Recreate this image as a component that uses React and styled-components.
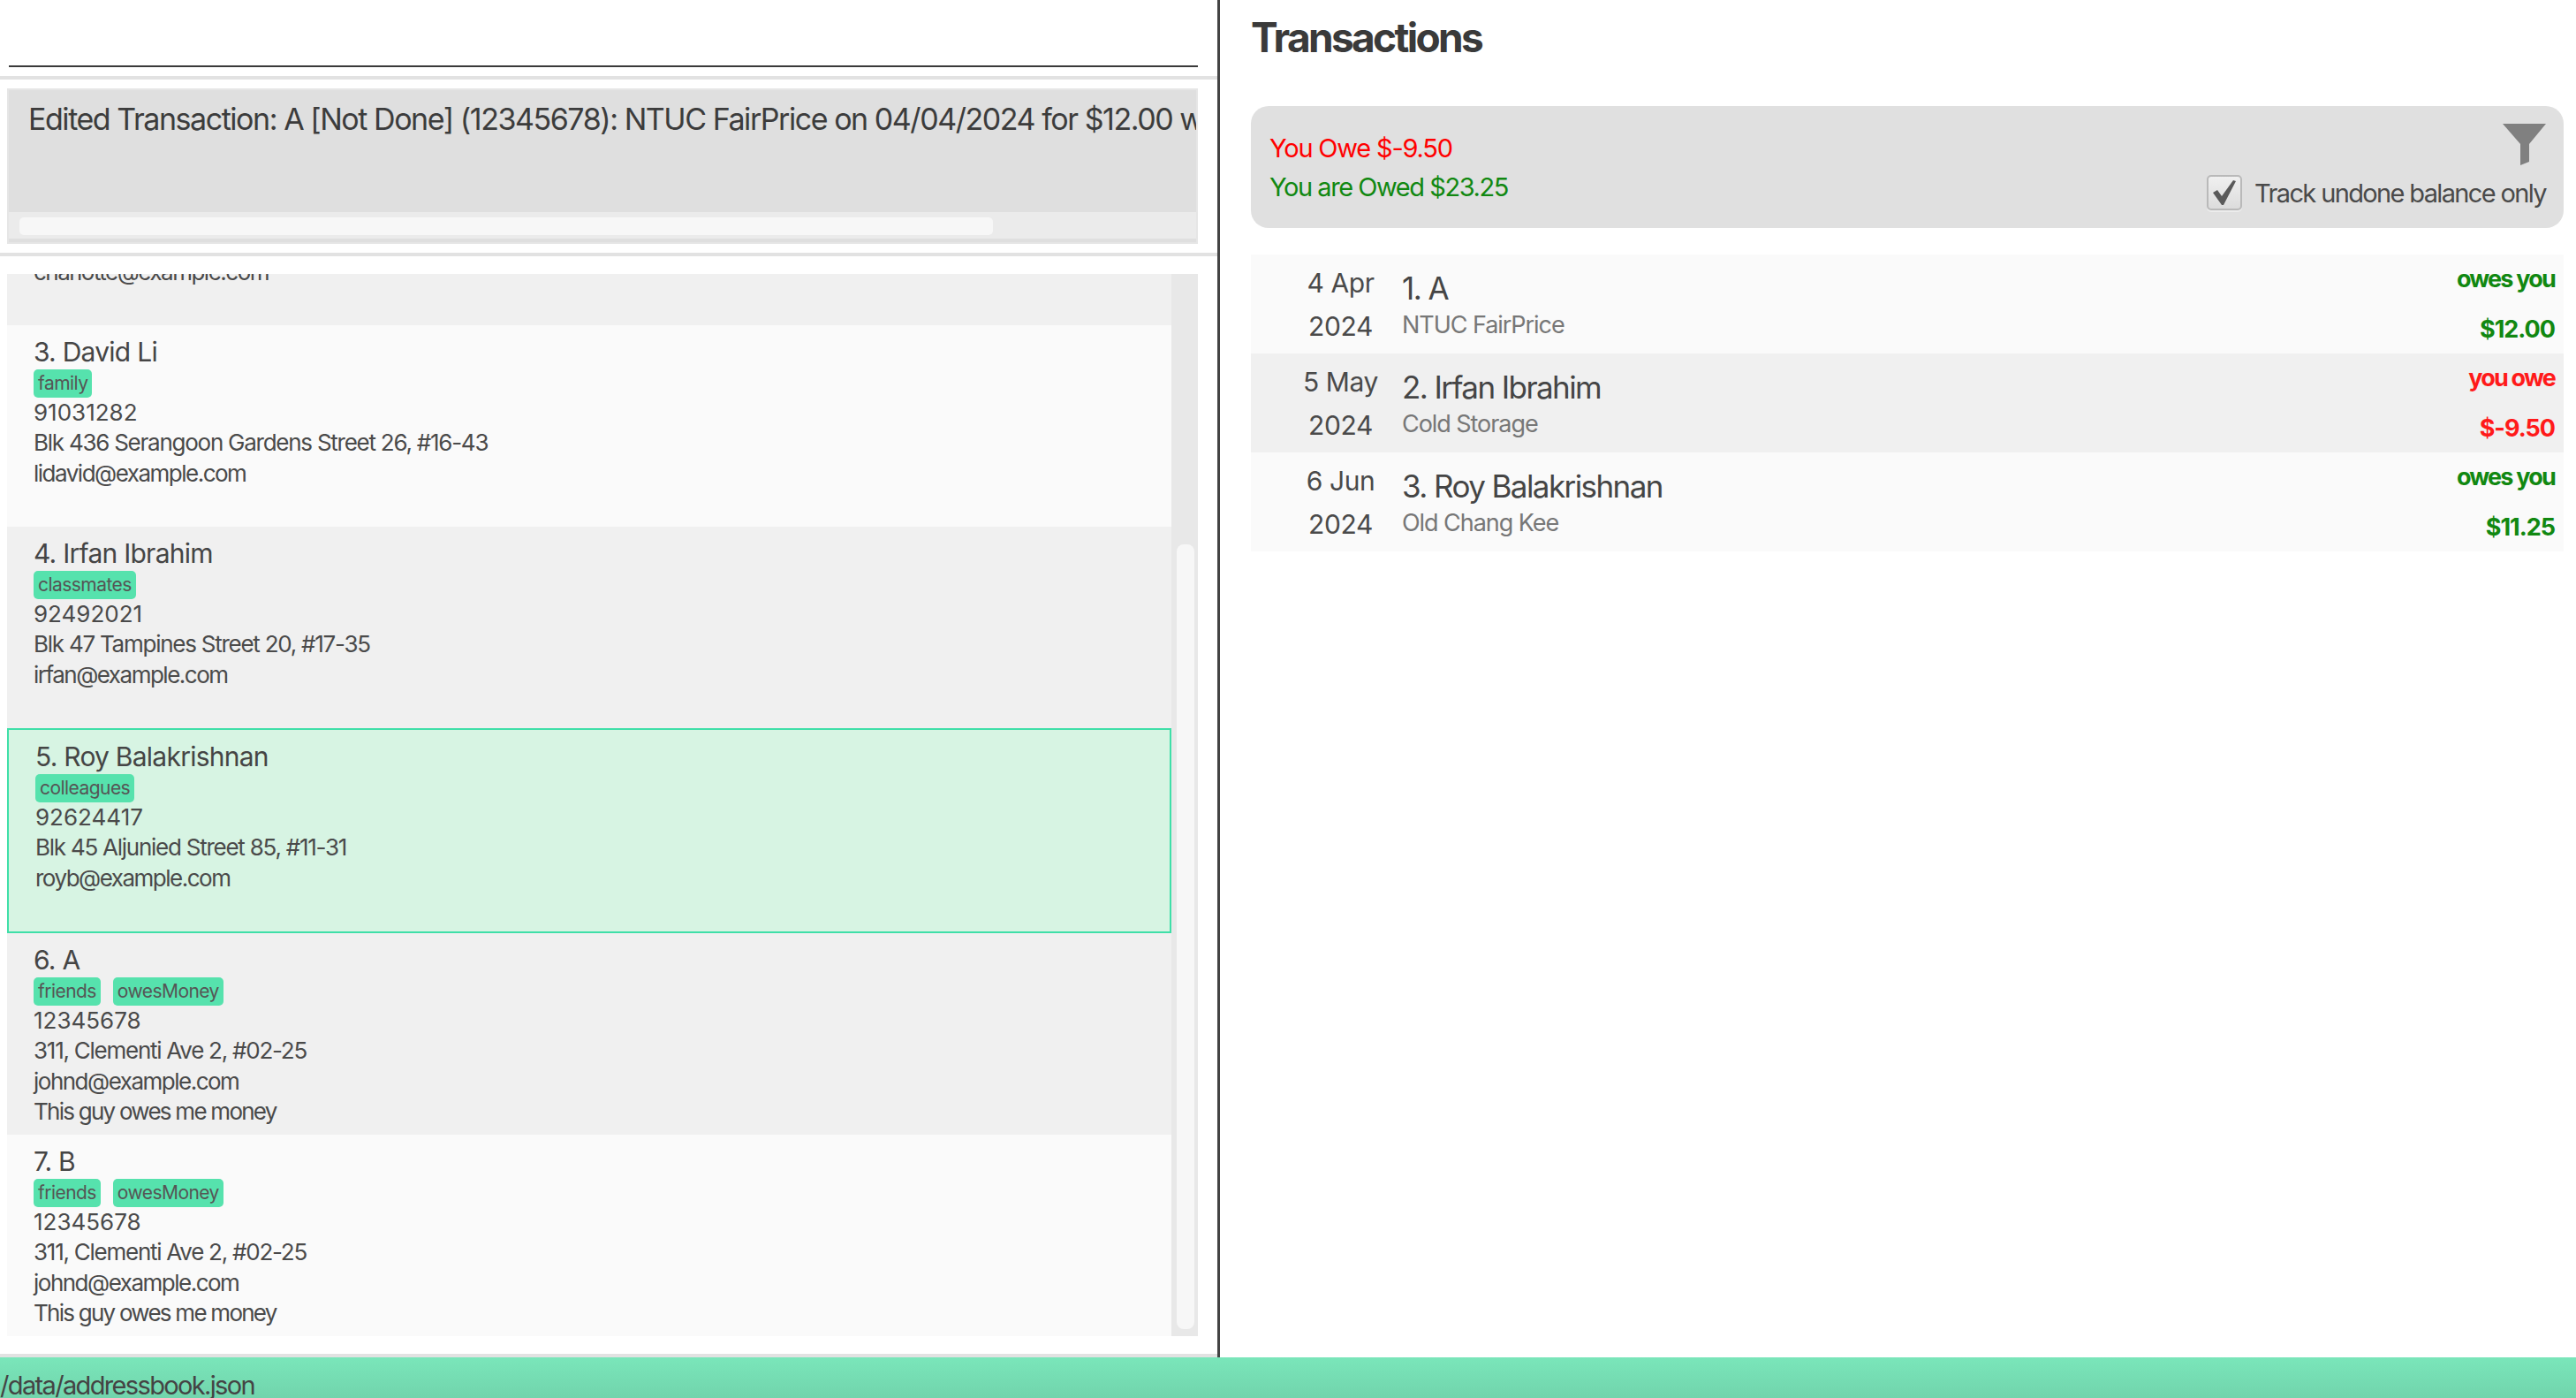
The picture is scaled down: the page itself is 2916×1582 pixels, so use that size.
import React from 'react';
import styled, { createGlobalStyle } from 'styled-components';

const GlobalStyle = createGlobalStyle`
	html, body {
		margin: 0;
		padding: 0;
		background: #fff;
		overflow: hidden;
	}
	* {
		box-sizing: border-box;
	}
`;

const Page = styled.div`
	width: 2916px;
	height: 1582px;
	display: flex;
	flex-direction: column;
	font-family: Inter, "Noto Sans", sans-serif;
	color: #4a4a4a;
	overflow: hidden;
`;

const Main = styled.div`
	display: flex;
	height: 1536px;
`;

const LeftPane = styled.div`
	width: 1381px;
	display: flex;
	flex-direction: column;
	border-right: 3px solid #444;
`;

const CommandBar = styled.div`
	height: 90px;
	padding: 0 22px 0 10px;
	border-bottom: 4px solid #e2e2e2;
`;

const CommandInput = styled.div`
	height: 76px;
	border-bottom: 2px solid #3a3a3a;
`;

const ResultBar = styled.div`
	height: 200px;
	padding: 10px 22px 10px 8px;
	border-bottom: 4px solid #e2e2e2;
`;

const ResultBox = styled.div`
	height: 176px;
	display: flex;
	flex-direction: column;
	background: #dfdfdf;
	border: 2px solid #e6e6e6;
`;

const ResultText = styled.div`
	flex: 1;
	padding: 12px 0 0 22px;
	font-size: 34px;
	line-height: 42px;
	letter-spacing: -1.45px;
	color: #3c3c3c;
	white-space: nowrap;
	overflow: hidden;
`;

const HorizontalTrack = styled.div`
	height: 30px;
	margin-bottom: 4px;
	padding: 6px 0 4px 12px;
	background: #ebebeb;
`;

const HorizontalThumb = styled.div`
	width: 1102px;
	height: 20px;
	background: #f7f7f7;
	border-radius: 5px;
`;

const ListSection = styled.div`
	height: 1246px;
	display: flex;
	padding: 20px 22px 20px 8px;
	border-bottom: 4px solid #e2e2e2;
`;

const ListViewport = styled.div`
	flex: 1;
	overflow: hidden;
`;

const PersonList = styled.div`
	margin-top: -170px;
`;

const PersonCell = styled.div`
	height: ${(p) => (p.$selected ? '232px' : '228px')};
	padding: ${(p) => (p.$clipped ? '151px' : '12px')} 0 0 30px;
	background: ${(p) => (p.$selected ? '#d7f4e3' : p.$light ? '#fafafa' : '#f0f0f0')};
	${(p) => p.$selected && 'border: 2px solid #3fdfa8;'}
`;

const PersonName = styled.div`
	font-size: 30px;
	line-height: 36px;
	letter-spacing: -0.75px;
	margin-bottom: 2px;
	color: #454545;
`;

const TagRow = styled.div`
	display: flex;
	gap: 14px;
`;

const Tag = styled.span`
	height: 32px;
	padding: 0 5px;
	border-radius: 5px;
	background: #56e2ad;
	font-size: 21px;
	line-height: 31px;
	letter-spacing: -0.55px;
	color: #555;
`;

const PersonLine = styled.div`
	font-size: 26px;
	line-height: 34.3px;
	letter-spacing: ${(p) => p.$tracking || 0}px;
	white-space: nowrap;
`;

const VerticalTrack = styled.div`
	width: 30px;
	padding: 306px 4px 0 6px;
	background: #e8e8e8;
`;

const VerticalThumb = styled.div`
	height: 888px;
	background: #f7f7f7;
	border-radius: 8px;
`;

const RightPane = styled.div`
	flex: 1;
	display: flex;
	flex-direction: column;
	padding: 0 14px 0 35px;
`;

const Title = styled.div`
	height: 120px;
	padding-top: 17px;
	font-size: 46px;
	line-height: 50px;
	font-weight: 700;
	letter-spacing: -2.65px;
	color: #3a3a3a;
`;

const SummaryPanel = styled.div`
	height: 138px;
	display: flex;
	justify-content: space-between;
	padding: 20px 20px 20px 21px;
	background: #e0e0e0;
	border-radius: 20px;
`;

const Balances = styled.div`
	display: flex;
	flex-direction: column;
	justify-content: center;
	gap: 8px;
	padding-top: 2px;
`;

const Balance = styled.div`
	font-size: 29px;
	line-height: 36px;
	letter-spacing: ${(p) => (p.$owed ? '-1.45px' : '-1.2px')};
	color: ${(p) => (p.$owed ? '#118811' : '#ff0000')};
`;

const FilterColumn = styled.div`
	display: flex;
	flex-direction: column;
	align-items: flex-end;
	justify-content: space-between;
`;

const TrackToggle = styled.div`
	display: flex;
	align-items: center;
	gap: 14px;
	font-size: 29px;
	letter-spacing: -1.64px;
	color: #4a4a4a;
`;

const CheckBox = styled.span`
	width: 40px;
	height: 40px;
	display: flex;
	align-items: center;
	justify-content: center;
	border: 2px solid #b9b9b9;
	border-radius: 5px;
	background: linear-gradient(#f0f0f0, #dcdcdc);
	box-shadow: 0 2px 0 #ececec;
`;

const TransactionList = styled.div`
	margin-top: 30px;
`;

const TransactionRow = styled.div`
	height: 112px;
	display: flex;
	background: ${(p) => (p.$odd ? '#f0f0f0' : '#fafafa')};
`;

const DateColumn = styled.div`
	width: 171px;
	padding: 14px 0 0 32px;
	display: flex;
	flex-direction: column;
	align-items: center;
	gap: 13px;
	font-size: 30px;
	line-height: 36px;
	letter-spacing: -0.4px;
	color: #4a4a4a;
`;

const Details = styled.div`
	flex: 1;
	padding-top: 17px;
`;

const PayeeName = styled.div`
	font-size: 35px;
	line-height: 42px;
	letter-spacing: -1.58px;
	margin-bottom: 3px;
	color: #454545;
`;

const Location = styled.div`
	font-size: 27px;
	line-height: 36px;
	letter-spacing: -1.05px;
	color: #777;
`;

const Amounts = styled.div`
	padding: 10px 10px 9px 0;
	display: flex;
	flex-direction: column;
	align-items: flex-end;
	justify-content: space-between;
	height: 112px;
	font-size: 27px;
	line-height: 36px;
	font-weight: 700;
	color: ${(p) => (p.$owe ? '#ff1a1a' : '#118811')};
`;

const OweLabel = styled.span`
	letter-spacing: -1.8px;
`;

const OweAmount = styled.span`
	letter-spacing: -1px;
`;

const StatusBar = styled.div`
	height: 46px;
	padding-top: 18px;
	background: linear-gradient(#7ae6ba, #71d4ac);
	font-size: 29px;
	line-height: 28px;
	letter-spacing: -1.65px;
	color: #444;
`;

const people = [
	{ email: 'charlotte@example.com', clipped: true },
	{ name: '3. David Li', tags: ['family'], phone: '91031282', address: 'Blk 436 Serangoon Gardens Street 26, #16-43', email: 'lidavid@example.com', light: true },
	{ name: '4. Irfan Ibrahim', tags: ['classmates'], phone: '92492021', address: 'Blk 47 Tampines Street 20, #17-35', email: 'irfan@example.com' },
	{ name: '5. Roy Balakrishnan', tags: ['colleagues'], phone: '92624417', address: 'Blk 45 Aljunied Street 85, #11-31', email: 'royb@example.com', selected: true },
	{ name: '6. A', tags: ['friends', 'owesMoney'], phone: '12345678', address: '311, Clementi Ave 2, #02-25', email: 'johnd@example.com', note: 'This guy owes me money' },
	{ name: '7. B', tags: ['friends', 'owesMoney'], phone: '12345678', address: '311, Clementi Ave 2, #02-25', email: 'johnd@example.com', note: 'This guy owes me money', light: true },
];

const transactions = [
	{ date: '4 Apr', name: '1. A', location: 'NTUC FairPrice', label: 'owes you', amount: '$12.00' },
	{ date: '5 May', name: '2. Irfan Ibrahim', location: 'Cold Storage', label: 'you owe', amount: '$-9.50', owe: true },
	{ date: '6 Jun', name: '3. Roy Balakrishnan', location: 'Old Chang Kee', label: 'owes you', amount: '$11.25' },
];

const FunnelIcon = () => (
	<svg width="49" height="47" viewBox="0 0 49 47">
		<path d="M0 0H49L30 23V43L20 47V23Z" fill="#808080" />
	</svg>
);

const CheckIcon = () => (
	<svg width="30" height="30" viewBox="0 0 30 30">
		<path d="M2 15L7 12L12 19L25 1L28 2L14 29H12Z" fill="#5a5a5a" />
	</svg>
);

const App = () => (
	<Page>
		<GlobalStyle />
		<Main>
			<LeftPane>
				<CommandBar>
					<CommandInput />
				</CommandBar>
				<ResultBar>
					<ResultBox>
						<ResultText>
							Edited Transaction: A [Not Done] (12345678): NTUC FairPrice on 04/04/2024 for $12.00 with
						</ResultText>
						<HorizontalTrack>
							<HorizontalThumb />
						</HorizontalTrack>
					</ResultBox>
				</ResultBar>
				<ListSection>
					<ListViewport>
						<PersonList>
							{people.map((person, index) => (
								<PersonCell
									key={index}
									$light={person.light}
									$selected={person.selected}
									$clipped={person.clipped}
								>
									{person.name && <PersonName>{person.name}</PersonName>}
									{person.tags && (
										<TagRow>
											{person.tags.map((tag) => (
												<Tag key={tag}>{tag}</Tag>
											))}
										</TagRow>
									)}
									{person.phone && <PersonLine>{person.phone}</PersonLine>}
									{person.address && <PersonLine $tracking={-1.25}>{person.address}</PersonLine>}
									<PersonLine $tracking={-1.5}>{person.email}</PersonLine>
									{person.note && <PersonLine $tracking={-1.75}>{person.note}</PersonLine>}
								</PersonCell>
							))}
						</PersonList>
					</ListViewport>
					<VerticalTrack>
						<VerticalThumb />
					</VerticalTrack>
				</ListSection>
			</LeftPane>
			<RightPane>
				<Title>Transactions</Title>
				<SummaryPanel>
					<Balances>
						<Balance>You Owe $-9.50</Balance>
						<Balance $owed>You are Owed $23.25</Balance>
					</Balances>
					<FilterColumn>
						<FunnelIcon />
						<TrackToggle>
							<CheckBox>
								<CheckIcon />
							</CheckBox>
							Track undone balance only
						</TrackToggle>
					</FilterColumn>
				</SummaryPanel>
				<TransactionList>
					{transactions.map((item, index) => (
						<TransactionRow key={index} $odd={index % 2 === 1}>
							<DateColumn>
								<span>{item.date}</span>
								<span>2024</span>
							</DateColumn>
							<Details>
								<PayeeName>{item.name}</PayeeName>
								<Location>{item.location}</Location>
							</Details>
							<Amounts $owe={item.owe}>
								<OweLabel>{item.label}</OweLabel>
								<OweAmount>{item.amount}</OweAmount>
							</Amounts>
						</TransactionRow>
					))}
				</TransactionList>
			</RightPane>
		</Main>
		<StatusBar>/data/addressbook.json</StatusBar>
	</Page>
);

export default App;
